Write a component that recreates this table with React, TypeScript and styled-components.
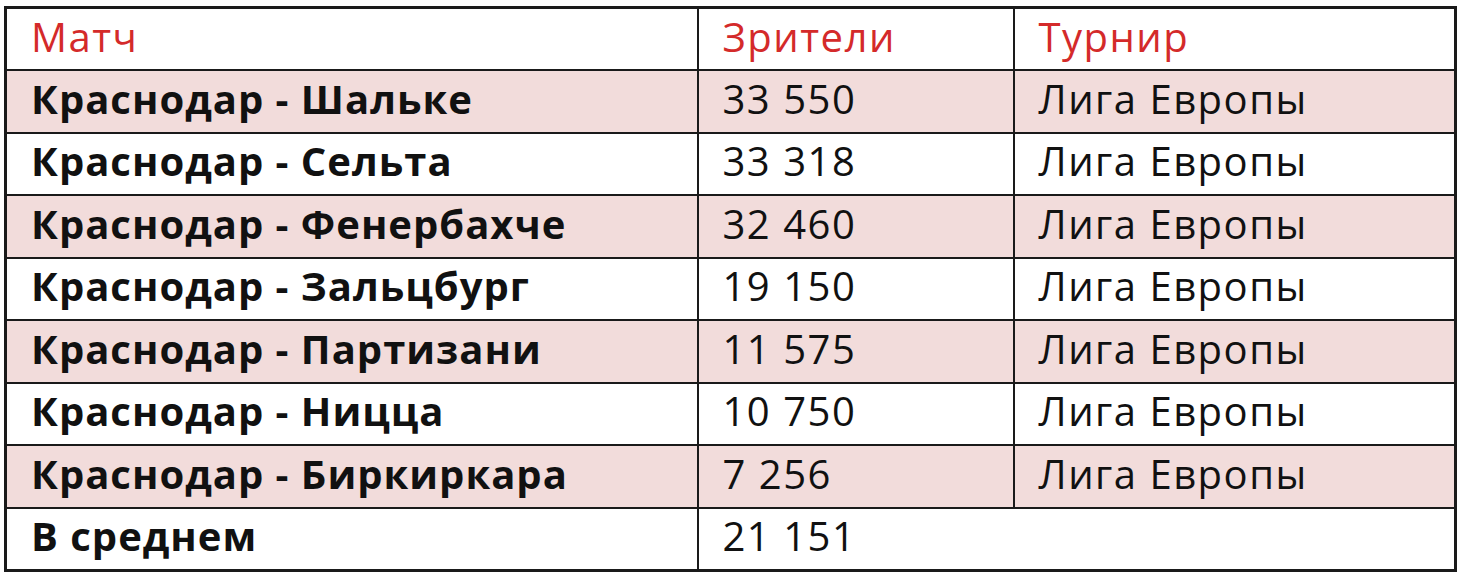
import styled, { createGlobalStyle } from 'styled-components';

interface IRow {
  match: string;
  viewers: string;
  tournament: string;
}

const rows: IRow[] = [
  { match: 'Краснодар - Шальке', viewers: '33 550', tournament: 'Лига Европы' },
  { match: 'Краснодар - Сельта', viewers: '33 318', tournament: 'Лига Европы' },
  { match: 'Краснодар - Фенербахче', viewers: '32 460', tournament: 'Лига Европы' },
  { match: 'Краснодар - Зальцбург', viewers: '19 150', tournament: 'Лига Европы' },
  { match: 'Краснодар - Партизани', viewers: '11 575', tournament: 'Лига Европы' },
  { match: 'Краснодар - Ницца', viewers: '10 750', tournament: 'Лига Европы' },
  { match: 'Краснодар - Биркиркара', viewers: '7 256', tournament: 'Лига Европы' },
];

const GlobalStyle = createGlobalStyle`
  html, body {
    margin: 0;
    padding: 0;
    background: #ffffff;
  }
  body {
    font-family: 'Open Sans', 'Noto Sans', sans-serif;
  }
`;

const Page = styled.div`
  padding: 6px 0 0 4px;
`;

const Table = styled.table`
  width: 1450px;
  border-collapse: collapse;
  table-layout: fixed;
  border: 3px solid #1a1a1a;
`;

const Row = styled.tr<{ $shaded?: boolean }>`
  height: 62.5px;
  background: ${({ $shaded }) => ($shaded ? '#f2dcdb' : '#ffffff')};
`;

const Cell = styled.td<{ $bold?: boolean; $head?: boolean }>`
  border: 2px solid #1a1a1a;
  padding: 0 0 5px 24px;
  vertical-align: middle;
  font-size: 40px;
  line-height: 1;
  white-space: nowrap;
  letter-spacing: ${({ $bold }) => ($bold ? '1px' : '1.5px')};
  color: ${({ $head }) => ($head ? '#d42a2a' : '#111111')};
  font-weight: ${({ $bold }) => ($bold ? 700 : 400)};
`;

const App = () => (
  <Page>
    <GlobalStyle />
    <Table>
      <colgroup>
        <col style={{ width: 692 }} />
        <col style={{ width: 316 }} />
        <col style={{ width: 442 }} />
      </colgroup>
      <tbody>
        <Row>
          <Cell $head>Матч</Cell>
          <Cell $head>Зрители</Cell>
          <Cell $head>Турнир</Cell>
        </Row>
        {rows.map((r, i) => (
          <Row key={r.match} $shaded={i % 2 === 0}>
            <Cell $bold>{r.match}</Cell>
            <Cell>{r.viewers}</Cell>
            <Cell>{r.tournament}</Cell>
          </Row>
        ))}
        <Row>
          <Cell $bold>В среднем</Cell>
          <Cell colSpan={2}>21 151</Cell>
        </Row>
      </tbody>
    </Table>
  </Page>
);

export default App;
